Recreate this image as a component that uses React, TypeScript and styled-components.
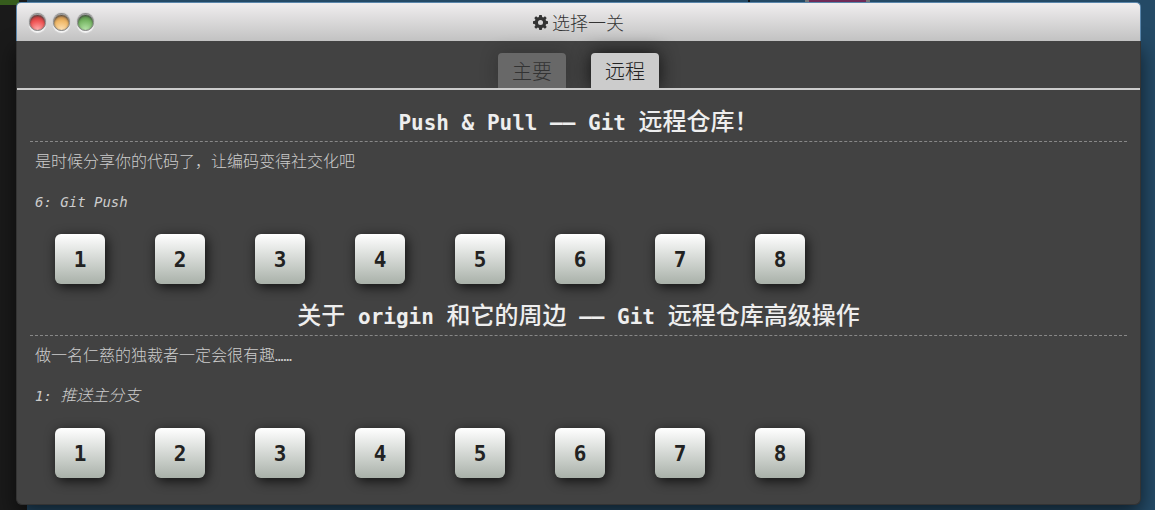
import React from "react";
import styled, { createGlobalStyle } from "styled-components";

const mono = `"DejaVu Sans Mono", "Noto Sans CJK SC", monospace`;
const cjk = `"Noto Sans CJK SC", sans-serif`;

const GlobalStyle = createGlobalStyle`
  *, *::before, *::after { box-sizing: border-box; }
  html, body, #root { height: 100%; }
  body { margin: 0; background: #244a66; }
  h1, h2, p { margin: 0; }
`;

const Desktop = styled.div`
  display: flex;
  flex-direction: column;
  min-height: 100%;
  padding: 2px 14px 5px 16px;
  background:
    linear-gradient(#365c1d, #365c1d) 0 0 / 19px 5px no-repeat,
    linear-gradient(#1a1a1a, #1a1a1a) 0 0 / 27px 100% no-repeat,
    linear-gradient(#111, #111) 748px 0 / 2px 2px no-repeat,
    linear-gradient(#6f2a57, #6f2a57) 809px 0 / 57px 2px no-repeat,
    linear-gradient(#777, #777) 805px 0 / 65px 2px no-repeat,
    #244a66;
`;

const Window = styled.main`
  display: flex;
  flex: 1;
  flex-direction: column;
`;

const TitleBar = styled.header`
  position: relative;
  display: grid;
  grid-template-columns: 1fr auto 1fr;
  align-items: center;
  height: 39px;
  padding: 0 12px;
  border: 1px solid #5a86ab;
  border-bottom: 0;
  border-radius: 5px 5px 0 0;
  background: linear-gradient(#f0eeef, #c2c2c2);
`;

const Lights = styled.div`
  display: flex;
  gap: 7px;
`;

const Light = styled.button<{ $top: string; $mid: string; $low: string }>`
  width: 17px;
  height: 17px;
  padding: 0;
  border: 1px solid #858585;
  border-radius: 50%;
  background: radial-gradient(circle at 50% 100%, ${(p) => p.$low}, ${(p) => p.$mid} 55%, ${(p) => p.$top});
  box-shadow: inset 0 1px 2px #444, 0 2px 1px #f4f4f4, 0 -1px 1px #808080;
`;

const WindowTitle = styled.h1`
  display: flex;
  align-items: center;
  gap: 4px;
  color: #333;
  font: 300 18px/24px ${cjk};
`;

const Body = styled.div`
  flex: 1;
  padding-bottom: 11px;
  border: 1px solid #333;
  border-top: 0;
  border-radius: 0 0 6px 6px;
  background: #424242;
  box-shadow: 0 8px 20px rgba(0, 0, 0, 0.6);
`;

const Tabs = styled.nav`
  display: flex;
  justify-content: center;
  gap: 25px;
  padding-top: 12px;
  border-bottom: 2px solid #ccc;
`;

const Tab = styled.button<{ $active?: boolean }>`
  height: 35px;
  padding: 0 14px;
  border: 0;
  border-radius: 4px 4px 0 0;
  background: ${(p) => (p.$active ? "#ccc" : "#686868")};
  color: ${(p) => (p.$active ? "#222" : "#333")};
  box-shadow: ${(p) => (p.$active ? "0 0 18px #111" : "0 0 18px rgba(17, 17, 17, 0.3)")};
  clip-path: inset(-30px -30px 0 -30px);
  font: 300 20px/35px ${cjk};
`;

const Levels = styled.div`
  padding: 14px 13px 0;
`;

const Sequence = styled.section`
  padding-bottom: 14px;
`;

const Heading = styled.h2`
  height: 38px;
  border-bottom: 1px dashed #888;
  color: #eee;
  font: bold 21px/33px ${mono};
  text-align: center;
`;

const Han = styled.span`
  font: 500 24px/32px ${cjk};
`;

const About = styled.p`
  height: 38px;
  padding-left: 5px;
  color: #ccc;
  font: 300 16px/36px ${cjk};
`;

const Dots = styled.span`
  font: 14px/16px ${mono};
`;

const LevelName = styled.p`
  height: 44px;
  padding-left: 5px;
  color: #ccc;
  font: italic 14px/44px ${mono};
`;

const SmallHan = styled.span`
  font: italic 300 16px/24px ${cjk};
`;

const Icons = styled.div`
  display: flex;
  flex-wrap: wrap;
  gap: 50px;
  padding: 10px 25px 0;
`;

const LevelButton = styled.button`
  width: 50px;
  height: 50px;
  padding: 2px 0 0;
  border: 0;
  border-radius: 6px;
  background: linear-gradient(#fff, #a9b1a9);
  box-shadow: 2px 3px 12px rgba(0, 0, 0, 0.75);
  color: #222;
  font: bold 21px/48px ${mono};
`;

const Gear = () => (
  <svg width="15" height="15" viewBox="0 0 16 16" fill="#333" aria-hidden="true">
    <path
      fillRule="evenodd"
      d="M6.7 0h2.6l.5 2.1 1.1.5L12.8 1.4l1.8 1.8-1.2 1.9.5 1.1 2.1.5v2.6l-2.1.5-.5 1.1 1.2 1.9-1.8 1.8-1.9-1.2-1.1.5-.5 2.1H6.7l-.5-2.1-1.1-.5-1.9 1.2-1.8-1.8 1.2-1.9-.5-1.1L0 9.3V6.7l2.1-.5.5-1.1L1.4 3.2l1.8-1.8 1.9 1.2 1.1-.5zM8 5.3a2.700 2.700 0 1 0 0 5.400 2.700 2.700 0 0 0 0-5.400z"
    />
  </svg>
);

const numbers = [1, 2, 3, 4, 5, 6, 7, 8];

const sequences = [
  {
    id: "push",
    title: <>Push &amp; Pull —— Git <Han>远程仓库！</Han></>,
    about: <>是时候分享你的代码了，让编码变得社交化吧</>,
    name: <>6: Git Push</>,
  },
  {
    id: "origin",
    title: (
      <>
        <Han>关于</Han> origin <Han>和它的周边</Han> —— Git <Han>远程仓库高级操作</Han>
      </>
    ),
    about: <>做一名仁慈的独裁者一定会很有趣<Dots>……</Dots></>,
    name: <>1: <SmallHan>推送主分支</SmallHan></>,
  },
];

export default function App() {
  return (
    <Desktop lang="zh-CN">
      <GlobalStyle />
      <Window>
        <TitleBar>
          <Lights>
            <Light aria-label="关闭" $top="#a52b2b" $mid="#ef5353" $low="#ffb0b0" />
            <Light aria-label="最小化" $top="#a8713a" $mid="#efb766" $low="#ffe3b8" />
            <Light aria-label="最大化" $top="#457c35" $mid="#78b765" $low="#b9e6ac" />
          </Lights>
          <WindowTitle><Gear />选择一关</WindowTitle>
        </TitleBar>
        <Body>
          <Tabs>
            <Tab>主要</Tab>
            <Tab $active>远程</Tab>
          </Tabs>
          <Levels>
            {sequences.map((s) => (
              <Sequence key={s.id}>
                <Heading>{s.title}</Heading>
                <About>{s.about}</About>
                <LevelName>{s.name}</LevelName>
                <Icons>
                  {numbers.map((n) => (
                    <LevelButton key={n}>{n}</LevelButton>
                  ))}
                </Icons>
              </Sequence>
            ))}
          </Levels>
        </Body>
      </Window>
    </Desktop>
  );
}
